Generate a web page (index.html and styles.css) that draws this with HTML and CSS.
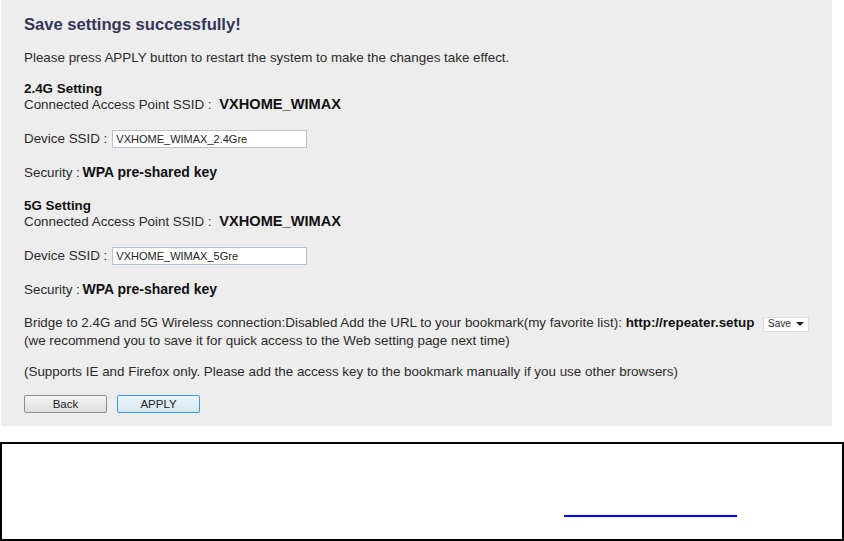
FILE: index.html
```html
<!DOCTYPE html>
<html lang="en">
<head>
  <meta charset="UTF-8">
  <title>Repeater Setup</title>
  <link rel="stylesheet" href="styles.css">
</head>
<body>

  <div class="panel">
    <h1>Save settings successfully!</h1>
    <p class="intro">Please press APPLY button to restart the system to make the changes take effect.</p>

    <div class="group">
      <div class="group-title">2.4G Setting</div>
      <div>Connected Access Point SSID : <b class="value">VXHOME_WIMAX</b></div>
    </div>
    <div class="field">
      <label for="ssid24">Device SSID :</label>
      <input type="text" id="ssid24" value="VXHOME_WIMAX_2.4Gre">
    </div>
    <div class="row">Security : <b class="key">WPA pre-shared key</b></div>

    <div class="group">
      <div class="group-title">5G Setting</div>
      <div>Connected Access Point SSID : <b class="value">VXHOME_WIMAX</b></div>
    </div>
    <div class="field">
      <label for="ssid5">Device SSID :</label>
      <input type="text" id="ssid5" value="VXHOME_WIMAX_5Gre">
    </div>
    <div class="row">Security : <b class="key">WPA pre-shared key</b></div>

    <div class="bridge">
      <div>Bridge to 2.4G and 5G Wireless connection:Disabled Add the URL to your bookmark(my favorite list): <b>http://repeater.setup</b>
        <span class="select">Save <span class="caret"></span></span>
      </div>
      <div>(we recommend you to save it for quick access to the Web setting page next time)</div>
    </div>
    <div class="row note">(Supports IE and Firefox only. Please add the access key to the bookmark manually if you use other browsers)</div>

    <div class="buttons">
      <button id="backBtn">Back</button>
      <button id="applyBtn" class="primary">APPLY</button>
    </div>
  </div>

  <div class="footer-box">
    <span class="link-line"></span>
  </div>

</body>
</html>
```

FILE: styles.css
```css
body {
  margin: 0;
  font-family: "Liberation Sans", Arial, sans-serif;
  font-size: 13.4px;
  color: #2b2b2b;
  background: #fff;
}
.panel {
  box-sizing: border-box;
  width: 831px;
  height: 426px;
  margin-left: 1px;
  padding: 16px 0 0 23px;
  background: #ededed;
  line-height: 16px;
}
h1 {
  margin: 0;
  font-size: 16.6px;
  line-height: 18px;
  color: #35355a;
}
.intro {
  margin: 16px 0 0;
}
.group {
  margin-top: 15px;
}
.group + .field {
  margin-top: 17px;
}
.group-title {
  font-weight: bold;
  color: #111;
}
b {
  color: #111;
  line-height: 1;
}
.value {
  margin-left: 4px;
  font-size: 14.6px;
}
.key {
  margin-left: -1px;
  font-size: 14px;
}
.field {
  display: flex;
  align-items: center;
  gap: 5px;
  height: 18px;
}
.field input {
  box-sizing: border-box;
  width: 195px;
  height: 18px;
  padding: 0 3px;
  border: 1px solid #b9c3cf;
  background: #fff;
  font-family: "Liberation Sans", Arial, sans-serif;
  font-size: 11px;
  color: #222;
}
.row {
  margin-top: 17px;
}
.row + .group {
  margin-top: 17px;
}
.bridge {
  margin-top: 16px;
  line-height: 17px;
}
.select {
  display: inline-flex;
  align-items: center;
  justify-content: space-between;
  box-sizing: border-box;
  width: 46px;
  height: 15px;
  margin-left: 5px;
  padding: 0 4px;
  border: 1px solid #dcdcdc;
  background: #fff;
  font-size: 10px;
  line-height: 1;
}
.caret {
  border-left: 4px solid transparent;
  border-right: 4px solid transparent;
  border-top: 4px solid #222;
}
.note {
  margin-top: 15px;
}
.buttons {
  display: flex;
  gap: 10px;
  margin-top: 15px;
}
.buttons button {
  box-sizing: border-box;
  width: 83px;
  height: 18px;
  padding: 0;
  border: 1px solid #8e8e8e;
  border-radius: 2px;
  background: linear-gradient(#f4f4f4, #dedede);
  font-family: "Liberation Sans", Arial, sans-serif;
  font-size: 11.5px;
  color: #222;
}
.buttons .primary {
  border-color: #3c9ad6;
  background: linear-gradient(#eaf4fb, #d5e7f4);
}
.footer-box {
  box-sizing: border-box;
  height: 99px;
  margin-top: 16px;
  border: 2px solid #000;
  padding: 71px 0 0 562px;
}
.link-line {
  display: block;
  width: 173px;
  height: 2px;
  background: #0000ff;
}
```
